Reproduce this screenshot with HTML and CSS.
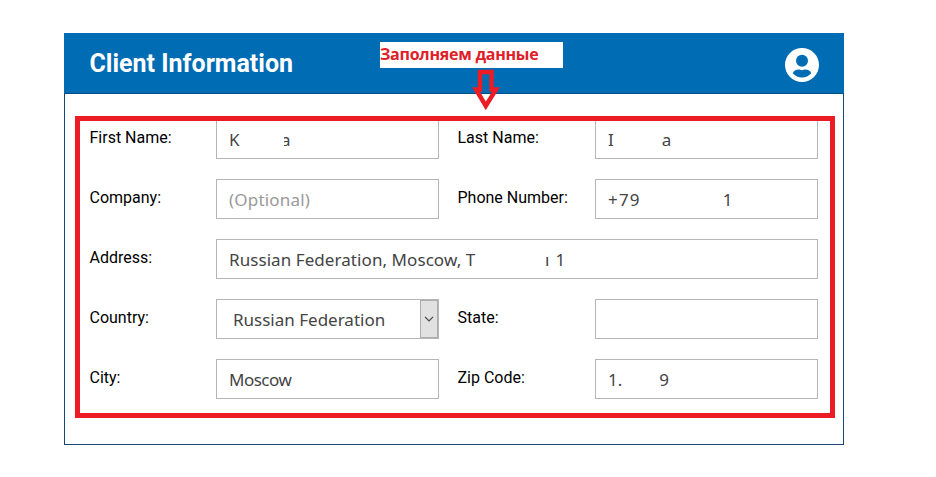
FILE: index.html
```html
<!DOCTYPE html>
<html lang="en">
<head>
<meta charset="utf-8">
<title>Client Information</title>
<link rel="stylesheet" href="styles.css">
</head>
<body>
<section class="panel">
  <header class="panel-header">
    <h1>Client Information</h1>
    <svg class="avatar" viewBox="0 0 34 34" aria-hidden="true">
      <circle cx="17" cy="17" r="17" fill="#fff"/>
      <circle cx="17" cy="12.7" r="6" fill="#006cb4"/>
      <path d="M7.7 25.2C9 22.4 11.4 21.6 13.3 21.6C15 21.6 15.5 22.2 17 22.2S19 21.6 20.7 21.6C22.6 21.6 25 22.4 26.3 25.2C21.5 30.8 12.5 30.8 7.7 25.2Z" fill="#006cb4"/>
    </svg>
  </header>
  <form class="form">
    <span class="label">First Name:</span>
    <div class="field"><span class="first-start">K</span><span class="first-end">a</span></div>
    <span class="label second">Last Name:</span>
    <div class="field"><span>I</span><span class="last-end">a</span></div>

    <span class="label">Company:</span>
    <div class="field placeholder">(Optional)</div>
    <span class="label second">Phone Number:</span>
    <div class="field phone"><span>+79</span><span class="phone-end">1</span></div>

    <span class="label">Address:</span>
    <div class="field wide"><span class="address">Russian Federation, Moscow, T</span><span class="street-end">ı</span><span class="house">1</span></div>

    <span class="label">Country:</span>
    <div class="field select"><span>Russian Federation</span>
      <span class="select-button"><svg viewBox="0 0 10 6"><path d="M1 .8L5 4.8L9 .8" fill="none" stroke="#444" stroke-width="1.2"/></svg></span>
    </div>
    <span class="label second">State:</span>
    <div class="field"></div>

    <span class="label">City:</span>
    <div class="field city">Moscow</div>
    <span class="label second">Zip Code:</span>
    <div class="field"><span>1.</span><span class="zip-end">9</span></div>
  </form>
  <div class="highlight"></div>
  <div class="note">Заполняем данные</div>
  <svg class="arrow" viewBox="0 0 28 42" aria-hidden="true">
    <path d="M8 3H19.5V20.5H24L13.8 37L4 20.5H8Z" fill="none" stroke="#ec1c24" stroke-width="4.5"/>
  </svg>
</section>
</body>
</html>
```

FILE: styles.css
```css
* {
  box-sizing: border-box;
}

body {
  margin: 0;
  padding: 33px 0 0 64px;
  background: #fff;
  font-family: Roboto, sans-serif;
}

.panel {
  position: relative;
  width: 780px;
  height: 412px;
  border: 1px solid #16487a;
  border-top: 0;
}

.panel-header {
  display: flex;
  align-items: center;
  justify-content: space-between;
  height: 61px;
  margin: 0 -1px;
  padding: 0 25px 0 25.5px;
  background: #006cb4;
  border-bottom: 1px solid #004c87;
}

.panel-header h1 {
  margin: 2px 0 0;
  color: #fff;
  font-size: 25px;
  font-weight: 700;
  line-height: 30px;
}

.avatar {
  width: 34px;
  height: 34px;
  margin-top: 4px;
}

.form {
  display: grid;
  grid-template-columns: 126.5px 223px 156px 223px;
  grid-auto-rows: 40px;
  row-gap: 20px;
  padding: 25px 0 0 24.5px;
}

.label {
  padding-top: 9px;
  font-size: 16px;
  line-height: 20px;
  color: #000;
}

.second {
  padding-left: 18.5px;
}

.field {
  display: flex;
  align-items: center;
  padding: 2px 0 0 12px;
  border: 1px solid #b5b5b5;
  font-family: "Noto Sans", sans-serif;
  font-size: 17px;
  line-height: 24px;
  color: #444;
  white-space: nowrap;
}

.placeholder {
  color: #999;
  letter-spacing: 0.2px;
}

.wide {
  grid-column: 2 / 5;
}

.first-start {
  width: 11px;
}

.first-end {
  margin-left: 41px;
  clip-path: inset(0 0 0 3px);
}

.last-end {
  margin-left: 48px;
}

.phone {
  letter-spacing: 1.2px;
}

.phone-end {
  margin-left: 82px;
}

.address {
  width: 247px;
  letter-spacing: 0.07px;
}

.street-end {
  margin-left: 69px;
}

.house {
  margin-left: 6px;
}

.select {
  justify-content: space-between;
  padding: 0 0 0 16px;
}

.select > span:first-child {
  padding-top: 2px;
}

.select-button {
  display: flex;
  align-items: center;
  justify-content: center;
  width: 18px;
  height: 38px;
  background: #e1e1e1;
  border: 1px solid #adadad;
}

.select-button svg {
  width: 10px;
  height: 6px;
}

.city {
  letter-spacing: -0.5px;
}

.zip-end {
  margin-left: 37px;
}

.highlight {
  position: absolute;
  top: 83px;
  left: 10px;
  width: 760px;
  height: 302px;
  border: 5px solid #ec1c24;
}

.note {
  position: absolute;
  top: 9px;
  left: 315px;
  width: 183px;
  height: 26px;
  background: #fff;
  color: #e02028;
  font-family: "Open Sans", sans-serif;
  font-size: 16px;
  font-weight: 700;
  letter-spacing: -0.25px;
  line-height: 25px;
  white-space: nowrap;
}

.arrow {
  position: absolute;
  top: 36px;
  left: 407px;
  width: 28px;
  height: 42px;
}
```
